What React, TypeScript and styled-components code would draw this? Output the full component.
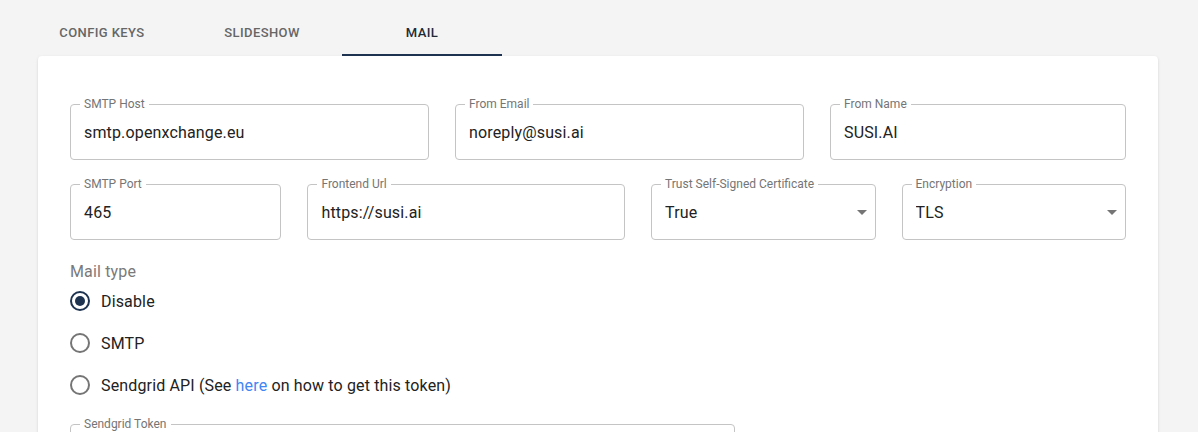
import React from 'react';
import styled, { createGlobalStyle } from 'styled-components';

type FieldType = {
    label: string;
    value: string;
    select?: boolean;
};

const topRow: Array<FieldType> = [
    { label: 'SMTP Host', value: 'smtp.openxchange.eu' },
    { label: 'From Email', value: 'noreply@susi.ai' },
    { label: 'From Name', value: 'SUSI.AI' },
];

const bottomRow: Array<FieldType> = [
    { label: 'SMTP Port', value: '465' },
    { label: 'Frontend Url', value: 'https://susi.ai' },
    { label: 'Trust Self-Signed Certificate', value: 'True', select: true },
    { label: 'Encryption', value: 'TLS', select: true },
];

const tabs = ['Config Keys', 'Slideshow', 'Mail'];

const OutlinedField = ({ label, value, select }: FieldType) => (
    <FieldBox>
        <FieldLabel>{label}</FieldLabel>
        <FieldInner>
            <FieldValue>{value}</FieldValue>
            {select && (
                <Arrow viewBox="0 0 10 5">
                    <path d="M0 0l5 5 5-5z" />
                </Arrow>
            )}
        </FieldInner>
    </FieldBox>
);

const App = () => {
    const selected = 'Disable';

    return (
        <>
            <GlobalStyle />
            <Page>
                <TabBar>
                    {tabs.map((tab) => (
                        <Tab key={tab} active={tab === 'Mail'}>
                            {tab}
                        </Tab>
                    ))}
                </TabBar>

                <Card>
                    <FieldRow columns="359fr 349fr 296fr">
                        {topRow.map((f) => (
                            <OutlinedField key={f.label} {...f} />
                        ))}
                    </FieldRow>
                    <FieldRow columns="211fr 317fr 224fr 224fr">
                        {bottomRow.map((f) => (
                            <OutlinedField key={f.label} {...f} />
                        ))}
                    </FieldRow>

                    <GroupLabel>Mail type</GroupLabel>
                    <RadioGroup>
                        <RadioRow>
                            <RadioCircle checked={selected === 'Disable'} />
                            <RadioText>Disable</RadioText>
                        </RadioRow>
                        <RadioRow>
                            <RadioCircle checked={selected === 'SMTP'} />
                            <RadioText>SMTP</RadioText>
                        </RadioRow>
                        <RadioRow>
                            <RadioCircle checked={selected === 'Sendgrid'} />
                            <RadioText>
                                Sendgrid API (See <Link href="#">here</Link> on how to get this token)
                            </RadioText>
                        </RadioRow>
                    </RadioGroup>

                    <TokenWrapper>
                        <OutlinedField label="Sendgrid Token" value="" />
                    </TokenWrapper>
                </Card>
            </Page>
        </>
    );
};

export default App;

const GlobalStyle = createGlobalStyle`
    html, body {
        margin: 0;
        padding: 0;
        background: #f4f4f4;
        font-family: Roboto, 'Liberation Sans', Arial, sans-serif;
        overflow: hidden;
    }
`;

const Page = styled.div`
    width: 1198px;
    height: 432px;
    padding-top: 8px;
    box-sizing: border-box;
    overflow: hidden;
`;

const TabBar = styled.div`
    display: flex;
    margin-left: 22px;
    height: 48px;
`;

const Tab = styled.div<{ active: boolean }>`
    width: 160px;
    height: 48px;
    box-sizing: border-box;
    display: flex;
    align-items: center;
    justify-content: center;
    font-size: 13px;
    font-weight: 500;
    letter-spacing: 0.4px;
    text-transform: uppercase;
    color: ${(p) => (p.active ? '#1f2a38' : '#666666')};
    border-bottom: 2px solid ${(p) => (p.active ? '#1e3350' : 'transparent')};
    padding-top: 2px;
`;

const Card = styled.div`
    margin: 0 40px 0 38px;
    background: #ffffff;
    border-radius: 4px;
    box-shadow: 0 1px 3px rgba(0, 0, 0, 0.12), 0 1px 1px rgba(0, 0, 0, 0.06);
    padding: 41px 32px 40px;
    min-height: 400px;
`;

const FieldRow = styled.div<{ columns: string }>`
    display: grid;
    grid-template-columns: ${(p) => p.columns};
    column-gap: 26px;
    margin-bottom: 17px;
`;

const FieldBox = styled.fieldset`
    margin: 0;
    min-width: 0;
    padding: 0 9px 0 9px;
    border: 1px solid #c4c4c4;
    border-radius: 4px;
`;

const FieldLabel = styled.legend`
    padding: 0 4px;
    font-size: 12px;
    line-height: 14px;
    color: #757575;
`;

const FieldInner = styled.div`
    display: flex;
    align-items: center;
    height: 43px;
    margin-bottom: 5px;
    padding: 0 0 0 4px;
`;

const FieldValue = styled.div`
    flex: 1;
    font-size: 16px;
    letter-spacing: 0.15px;
    color: #222222;
    white-space: nowrap;
    overflow: hidden;
`;

const Arrow = styled.svg`
    width: 10px;
    height: 5px;
    fill: #757575;
    margin-right: -1px;
`;

const GroupLabel = styled.div`
    margin-top: 24px;
    font-size: 16px;
    line-height: 16px;
    letter-spacing: 0.15px;
    color: #7a7a7a;
`;

const RadioGroup = styled.div`
    display: flex;
    flex-direction: column;
`;

const RadioRow = styled.label`
    display: flex;
    align-items: center;
    height: 42px;
    gap: 11px;
    cursor: pointer;
`;

const RadioCircle = styled.span<{ checked: boolean }>`
    width: 20px;
    height: 20px;
    box-sizing: border-box;
    border-radius: 50%;
    border: 2px solid ${(p) => (p.checked ? '#1e3350' : '#757575')};
    display: flex;
    align-items: center;
    justify-content: center;

    &::after {
        content: '';
        width: 10px;
        height: 10px;
        border-radius: 50%;
        background: #1e3350;
        display: ${(p) => (p.checked ? 'block' : 'none')};
    }
`;

const RadioText = styled.span`
    font-size: 16px;
    letter-spacing: 0.15px;
    color: #222222;
`;

const Link = styled.a`
    color: #4285f4;
    text-decoration: none;
`;

const TokenWrapper = styled.div`
    width: 665px;
    margin-top: 11px;
`;
